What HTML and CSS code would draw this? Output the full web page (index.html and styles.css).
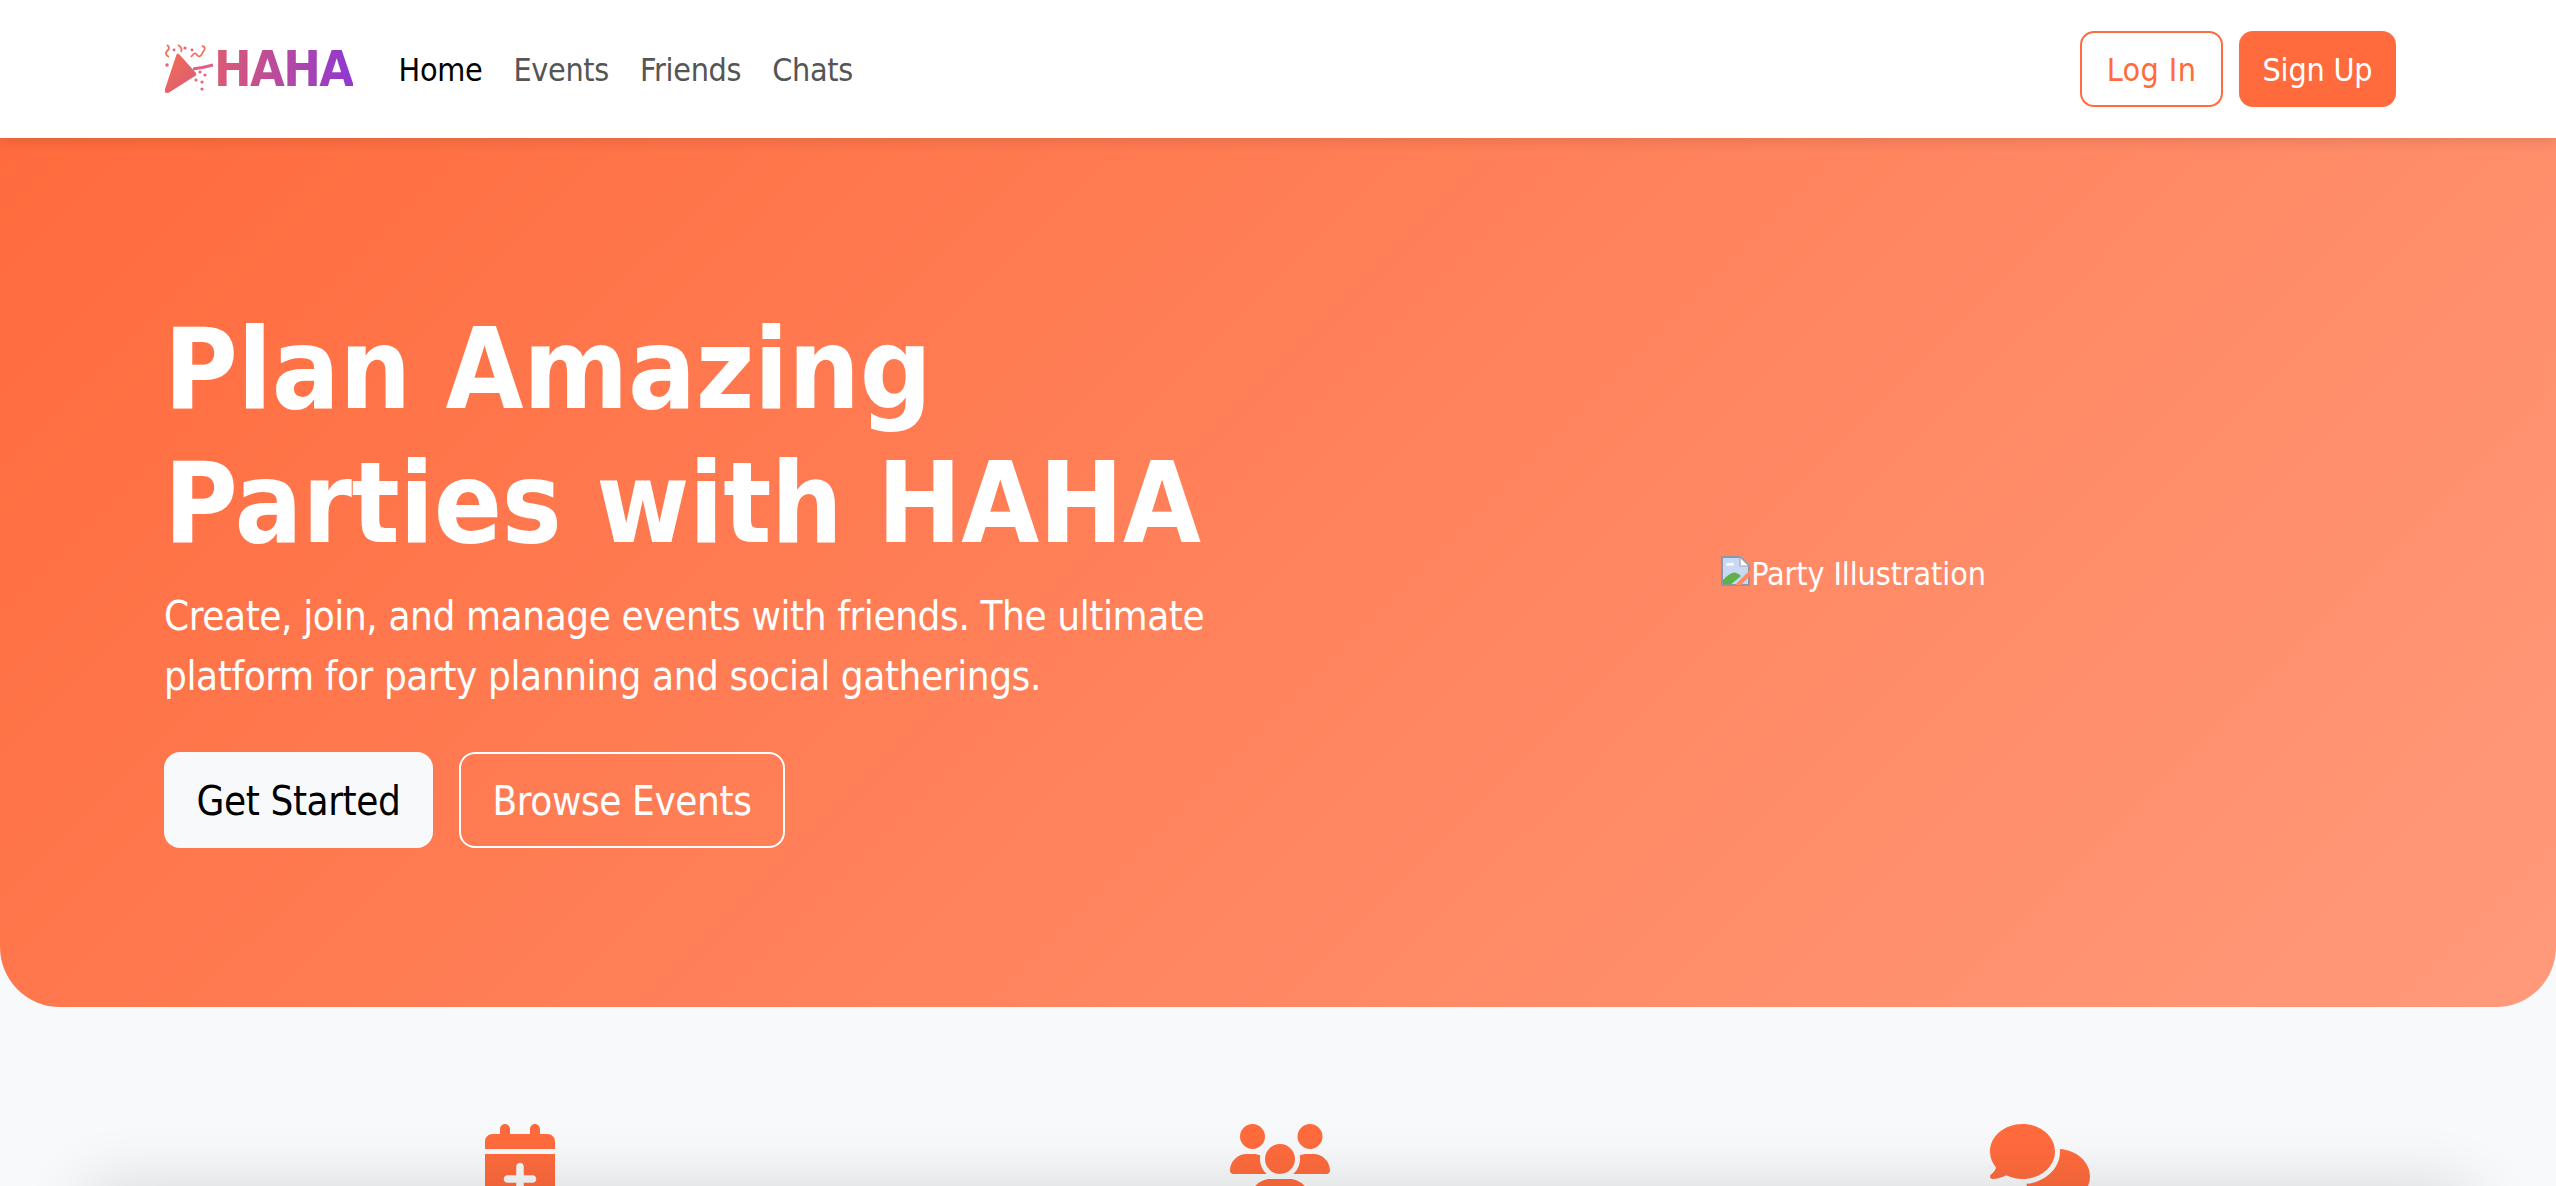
FILE: index.html
```html
<!DOCTYPE html>
<html lang="en">
<head>
    <meta charset="UTF-8">
    <meta name="viewport" content="width=device-width, initial-scale=1.0">
    <title>HAHA - Party Planning</title>
    <link rel="stylesheet" href="styles.css">
</head>
<body>
    <header class="site-header">
        <div class="header-left">
            <a class="logo" href="#">
                <svg class="logo-icon" viewBox="0 0 50 50" fill="none">
                    <defs>
                        <linearGradient id="cone" x1="0" y1="0" x2="1" y2="1">
                            <stop offset="0" stop-color="#f56f52"/>
                            <stop offset="1" stop-color="#d85a78"/>
                        </linearGradient>
                    </defs>
                    <path d="M15 10 L32 29 Q33 31 31 32 L5 48.5 Q0 50.5 1 45 L12 12 Q13 8.500 15 10Z" fill="url(#cone)"/>
                    <path d="M29 25 Q38 24 49 21" stroke="#e0608a" stroke-width="3"/>
                    <path d="M3 1 Q7 4 3 7 Q0 10 5 13 M14 1 Q19 4 17 8 M27 13 Q31 7 33 11 Q36 15 39 8 Q43 3 38 2" stroke="#f0705e" stroke-width="1.800"/>
                    <g fill="#e9637a">
                        <circle cx="3" cy="21" r="1.800"/>
                        <circle cx="21" cy="4" r="1.600"/>
                        <circle cx="10" cy="6" r="1.400"/>
                        <circle cx="36" cy="28" r="1.600"/>
                        <circle cx="41" cy="31" r="1.600"/>
                        <circle cx="32" cy="36" r="1.600"/>
                        <circle cx="38" cy="38" r="1.600"/>
                        <circle cx="38" cy="45" r="1.600"/>
                        <circle cx="28" cy="6" r="1.400"/>
                    </g>
                </svg>
                <span class="logo-text">HAHA</span>
            </a>
            <nav class="main-nav">
                <a class="active" href="#">Home</a>
                <a href="#">Events</a>
                <a href="#">Friends</a>
                <a href="#">Chats</a>
            </nav>
        </div>
        <div class="auth-buttons">
            <a class="btn btn-outline" href="#">Log In</a>
            <a class="btn btn-primary" href="#">Sign Up</a>
        </div>
    </header>

    <section class="hero">
        <div class="hero-content">
            <h1>Plan Amazing<br>Parties with HAHA</h1>
            <p>Create, join, and manage events with friends. The ultimate platform for party planning and social gatherings.</p>
            <div class="hero-buttons">
                <a class="btn-large btn-light" href="#">Get Started</a>
                <a class="btn-large btn-ghost" href="#">Browse Events</a>
            </div>
        </div>
        <div class="hero-image">
            <svg class="broken-icon" viewBox="0 0 16 16">
                <path d="M1.5 1h9L15 5.5V15H1.5Z" fill="#c9d9f4" stroke="#8a97a8" stroke-width="1"/>
                <path d="M10.5 1v4.500H15Z" fill="#fff" stroke="#a0a8b4" stroke-width=".6"/>
                <path d="M3.5 5.2a1.3 1.3 0 0 1 2-1 1.2 1.2 0 0 1 2 1Z" fill="#fff"/>
                <path d="M2 14.6V12.5Q5 9 7.5 8.7 9 8.700 11 10.500L6 14.600Z" fill="#5fb04a"/>
                <path d="M16 7 8 15h3l5-5Z" fill="#ff8a66"/>
            </svg><span>Party Illustration</span>
        </div>
    </section>

    <section class="features">
        <div class="feature">
            <svg class="feature-icon" viewBox="0 0 448 512"><path d="M96 32V64H48C21.5 64 0 85.5 0 112v48H448V112c0-26.5-21.5-48-48-48H352V32c0-17.7-14.3-32-32-32s-32 14.3-32 32V64H160V32c0-17.7-14.3-32-32-32S96 14.3 96 32zM448 192H0V464c0 26.5 21.5 48 48 48H400c26.5 0 48-21.5 48-48V192zM224 248c13.3 0 24 10.7 24 24v56h56c13.3 0 24 10.7 24 24s-10.7 24-24 24H248v56c0 13.3-10.7 24-24 24s-24-10.7-24-24V376H144c-13.3 0-24-10.7-24-24s10.7-24 24-24h56V272c0-13.3 10.7-24 24-24z"/></svg>
        </div>
        <div class="feature">
            <svg class="feature-icon" viewBox="0 0 640 512"><path d="M144 0a80 80 0 1 1 0 160A80 80 0 1 1 144 0zM512 0a80 80 0 1 1 0 160A80 80 0 1 1 512 0zM0 298.7C0 239.8 47.8 192 106.7 192h42.7c15.9 0 31 3.5 44.6 9.7c-1.3 7.2-1.9 14.7-1.9 22.3c0 38.2 16.8 72.5 43.3 96c-.2 0-.4 0-.7 0H21.3C9.6 320 0 310.4 0 298.7zM405.3 320c-.2 0-.4 0-.7 0c26.6-23.5 43.3-57.8 43.3-96c0-7.6-.7-15-1.9-22.3c13.6-6.3 28.7-9.7 44.6-9.7h42.7C592.2 192 640 239.8 640 298.7c0 11.8-9.6 21.3-21.3 21.3H405.3zM224 224a96 96 0 1 1 192 0 96 96 0 1 1 -192 0zM128 485.3C128 411.7 187.7 352 261.3 352H378.7C452.3 352 512 411.7 512 485.3c0 14.7-11.9 26.7-26.7 26.7H154.7c-14.7 0-26.7-11.9-26.7-26.7z"/></svg>
        </div>
        <div class="feature">
            <svg class="feature-icon" viewBox="0 0 640 512"><path d="M208 352c114.9 0 208-78.8 208-176S322.9 0 208 0S0 78.8 0 176c0 38.6 14.7 74.3 39.6 103.4c-3.5 9.4-8.7 17.7-14.2 24.7c-4.8 6.2-9.7 11-13.3 14.3c-1.8 1.6-3.3 2.9-4.3 3.7c-.5 .4-.9 .7-1.1 .8l-.2 .2 0 0 0 0C1 327.2-1.4 334.4 .8 340.9S9.1 352 16 352c21.8 0 43.8-5.6 62.1-12.5c9.2-3.5 17.8-7.4 25.3-11.4C134.1 343.3 169.8 352 208 352zM448 176c0 112.3-99.1 196.9-216.5 207C255.8 457.7 336.1 512 432 512c38.2 0 73.9-8.7 104.7-23.9c7.5 4 16 7.9 25.2 11.4c18.3 6.9 40.3 12.5 62.1 12.5c6.9 0 13.1-4.5 15.2-11.1c2.1-6.6-.2-13.8-5.8-17.9l0 0 0 0-.2-.2c-.2-.2-.6-.4-1.1-.8c-1-.8-2.5-2-4.3-3.7c-3.6-3.3-8.5-8.1-13.3-14.3c-5.5-7-10.7-15.4-14.2-24.7c24.9-29 39.6-64.7 39.6-103.4c0-92.8-84.9-168.9-192.6-175.5c.4 5.1 .6 10.3 .6 15.5z"/></svg>
        </div>
    </section>

    <div class="bottom-bar"></div>
</body>
</html>
```

FILE: styles.css
```css
* {
    box-sizing: border-box;
}
html, body {
    height: 100%;
    overflow: hidden;
}
body {
    margin: 0;
    font-family: "DejaVu Sans Condensed", "DejaVu Sans", sans-serif;
    background-color: #f8f9fa;
    color: #000;
}
a {
    text-decoration: none;
}

.site-header {
    display: flex;
    justify-content: space-between;
    align-items: center;
    height: 138px;
    padding: 0 160px 0 164px;
    background-color: #fff;
    box-shadow: 0 4px 12px rgba(0, 0, 0, 0.1);
    position: relative;
}
.header-left {
    display: flex;
    align-items: center;
    gap: 46px;
}
.logo {
    display: flex;
    align-items: center;
}
.logo-icon {
    width: 50px;
    height: 50px;
}
.logo-text {
    font-size: 50px;
    font-weight: 700;
    line-height: 1;
    letter-spacing: -1.6px;
    background: linear-gradient(90deg, #dd5b72, #8f38d2);
    -webkit-background-clip: text;
    background-clip: text;
    color: transparent;
}
.main-nav {
    display: flex;
    gap: 31px;
    padding-top: 2px;
}
.main-nav a {
    font-size: 32px;
    letter-spacing: -0.3px;
    color: #555;
}
.main-nav a.active {
    color: #000;
}
.auth-buttons {
    display: flex;
    gap: 16px;
}
.btn {
    display: flex;
    align-items: center;
    justify-content: center;
    height: 76px;
    padding-top: 2px;
    border-radius: 14px;
    font-size: 32px;
}
.btn-outline {
    width: 143px;
    border: 2px solid #ff6b3d;
    letter-spacing: 0.4px;
    color: #ff6b3d;
}
.btn-primary {
    width: 157px;
    background-color: #ff6b3d;
    letter-spacing: -0.2px;
    color: #fff;
}

.hero {
    display: grid;
    grid-template-columns: 1fr 1fr;
    gap: 58px;
    align-items: center;
    height: 869px;
    padding: 0 160px 0 164px;
    border-radius: 0 0 60px 60px;
    background: linear-gradient(135deg, #ff6b3d, #ff9a7b);
    color: #fff;
}
.hero-content {
    padding-top: 4px;
}
.hero h1 {
    margin: 0 0 16px;
    font-size: 112px;
    line-height: 134px;
    font-weight: 700;
    letter-spacing: -0.3px;
}
.hero p {
    margin: 0 0 46px;
    width: 1060px;
    font-size: 40px;
    line-height: 60px;
    letter-spacing: -0.4px;
}
.hero-buttons {
    display: flex;
    gap: 26px;
}
.btn-large {
    display: flex;
    align-items: center;
    justify-content: center;
    height: 96px;
    padding-top: 3px;
    border-radius: 16px;
    font-size: 40px;
    letter-spacing: -0.4px;
}
.btn-light {
    width: 269px;
    background-color: #f8f9fa;
    color: #000;
}
.btn-ghost {
    width: 326px;
    border: 2px solid #fff;
    color: #fff;
}
.hero-image {
    display: flex;
    align-items: center;
    justify-content: center;
    padding-top: 3px;
    font-size: 32px;
    letter-spacing: -0.1px;
}
.broken-icon {
    width: 32px;
    height: 32px;
    align-self: flex-start;
}

.features {
    display: grid;
    grid-template-columns: repeat(3, 760px);
    padding: 117px 136px 0 140px;
}
.feature {
    text-align: center;
}
.feature-icon {
    height: 80px;
    fill: #ff6b3d;
}

.bottom-bar {
    position: fixed;
    left: 80px;
    right: 80px;
    bottom: -60px;
    height: 60px;
    border-radius: 60px;
    background-color: #fff;
    box-shadow: 0 0 64px rgba(0, 0, 0, 0.14);
}
```
